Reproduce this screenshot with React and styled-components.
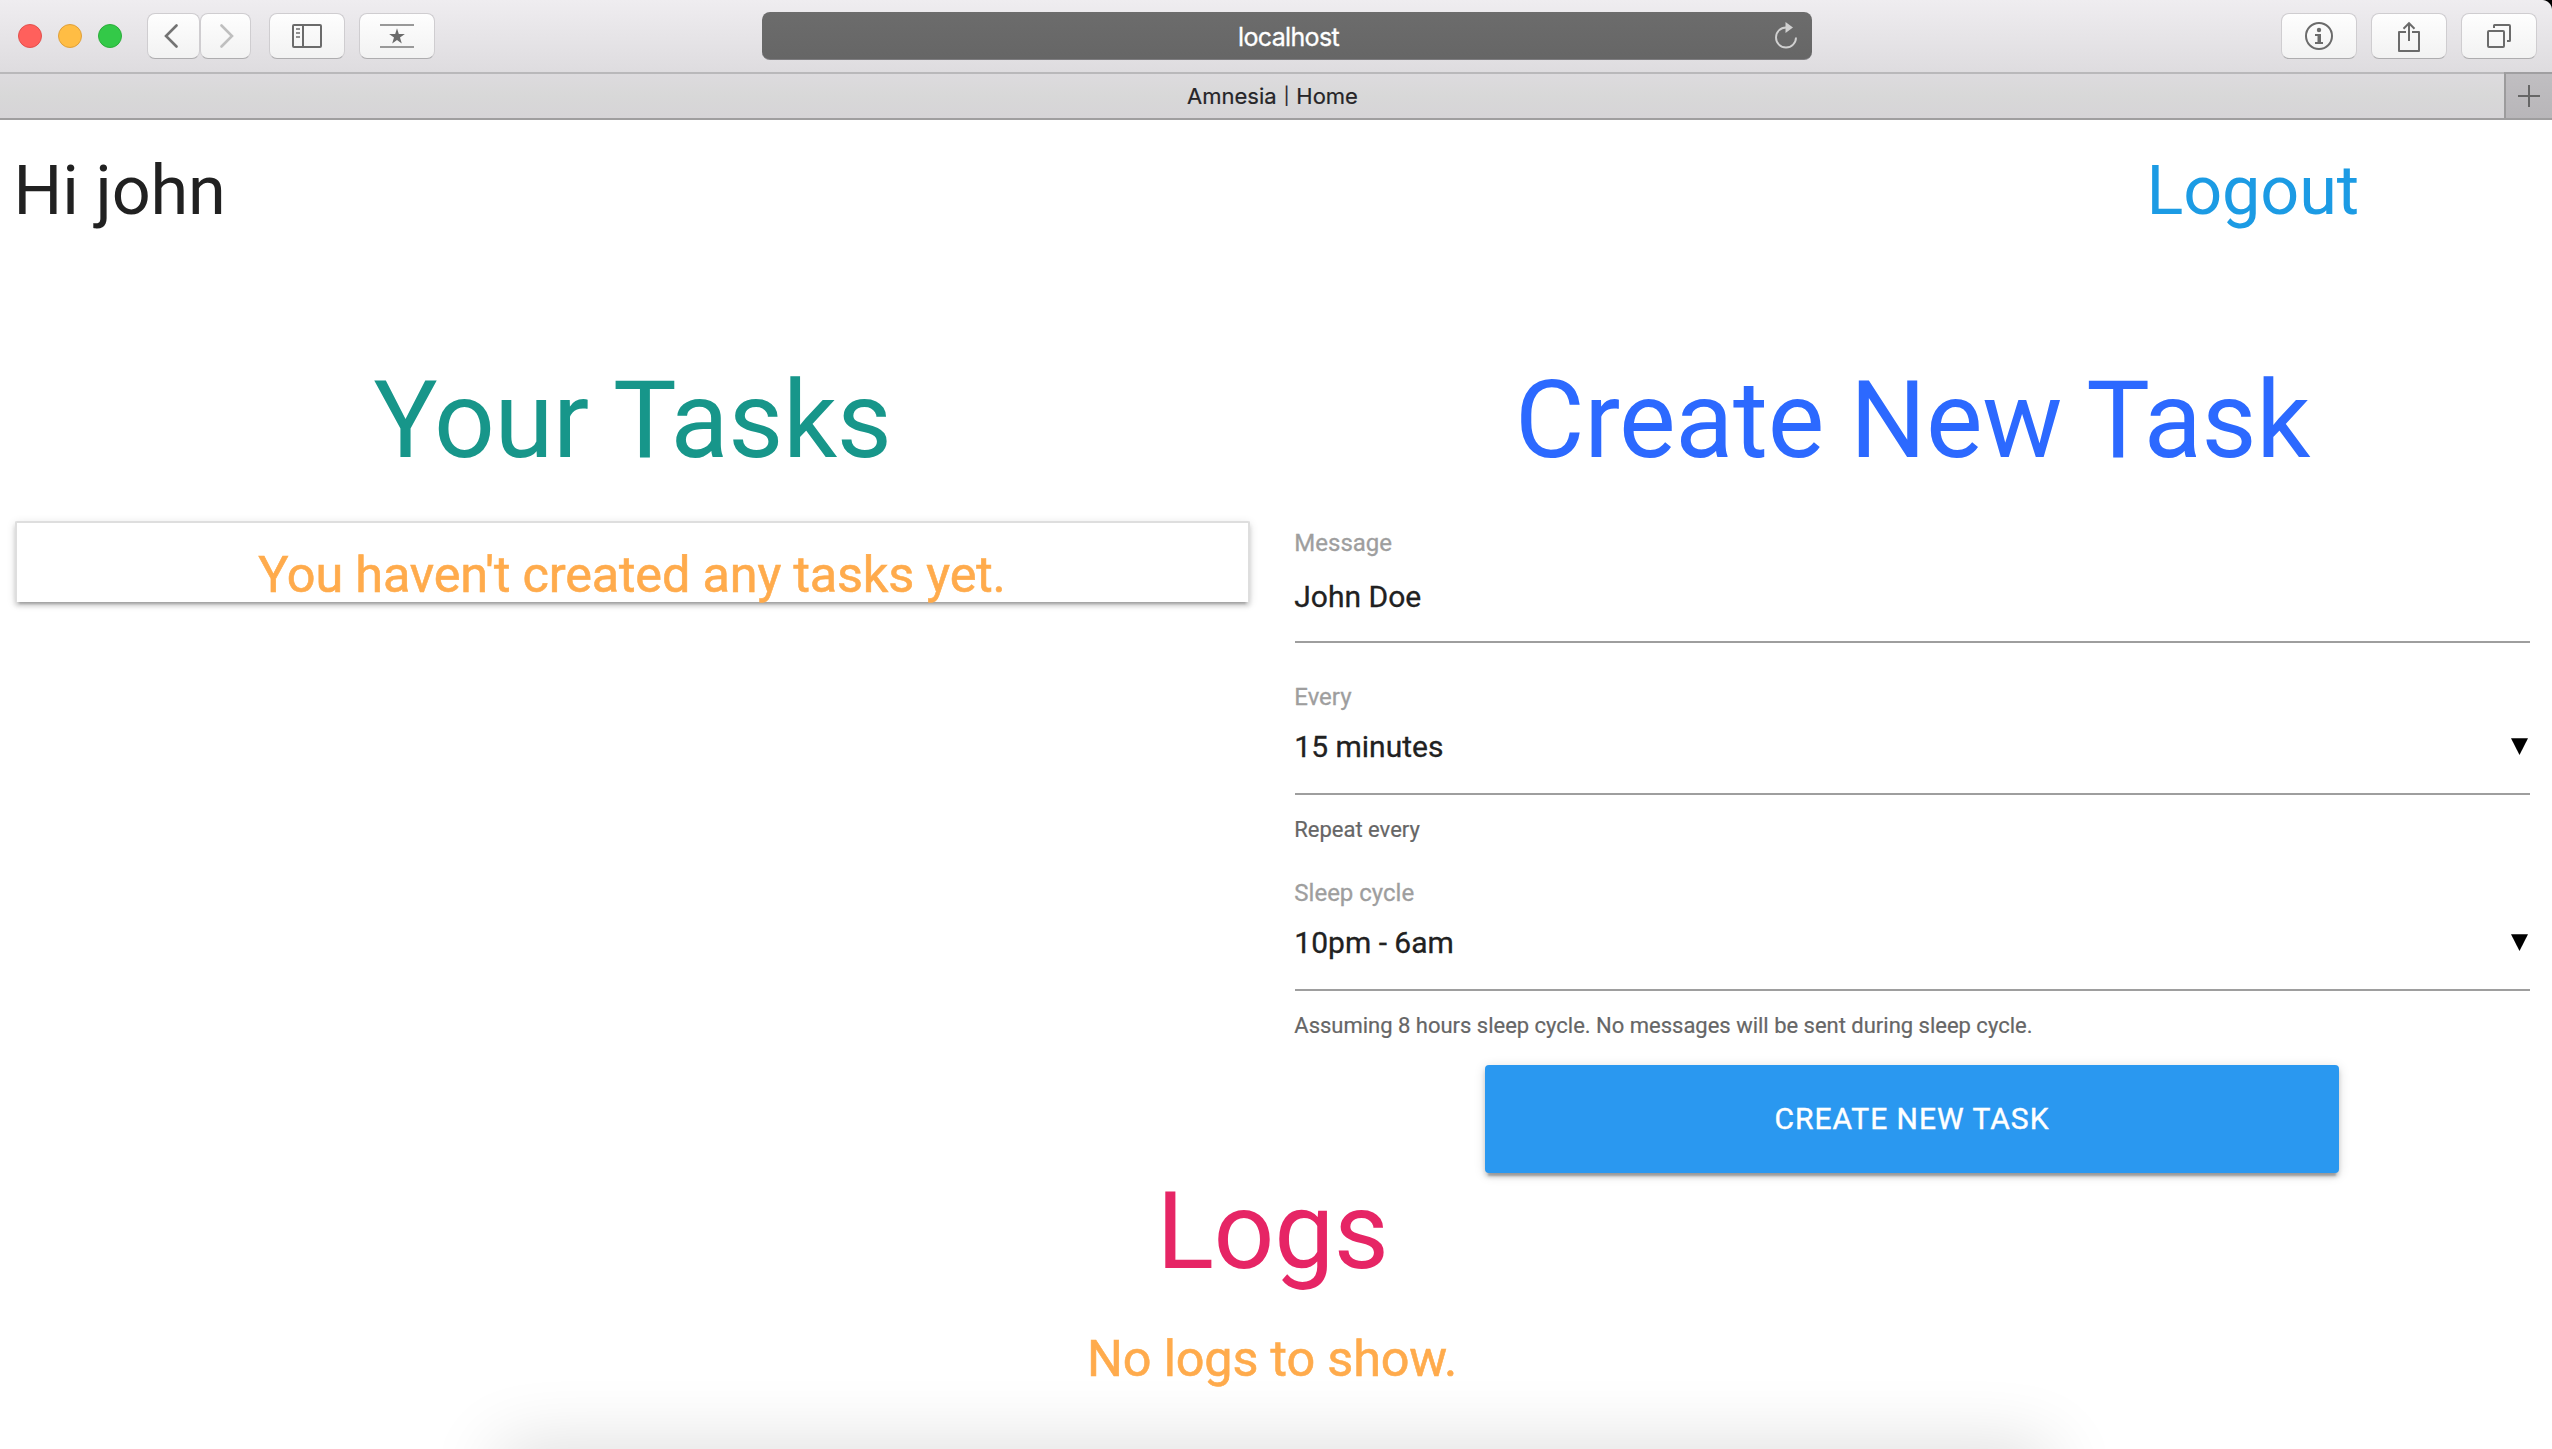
import React from "react";
import styled, { createGlobalStyle } from "styled-components";

const Global = createGlobalStyle`
  * { box-sizing: border-box; }
  html, body { margin: 0; padding: 0; background: #fff; overflow: hidden; }
  body { font-family: Roboto, "Liberation Sans", sans-serif; }
`;

const Window = styled.div`
  width: 2552px;
  height: 1449px;
  overflow: hidden;
  display: flex;
  flex-direction: column;
  background: #fff;
`;

const Toolbar = styled.header`
  flex: none;
  height: 74px;
  display: grid;
  grid-template-columns: 762px 1050px 1fr;
  align-items: start;
  padding-top: 12px;
  background: radial-gradient(circle at 0 10px, transparent 9.5px, #000 10.5px) right top / 10px 10px no-repeat,
    linear-gradient(#efedf0, #dedcdf 72px, #b9b8ba 72px);
`;

const Group = styled.div`
  display: flex;
  align-items: center;
  justify-content: ${(p) => (p.$end ? "flex-end" : "flex-start")};
  padding: ${(p) => (p.$end ? "1px 15px 0 0" : "1px 0 0 18px")};
  gap: ${(p) => (p.$end ? "14px" : "0")};
`;

const Light = styled.span`
  width: 24px;
  height: 24px;
  margin-right: 16px;
  border-radius: 50%;
  background: ${(p) => p.$fill};
  border: 1px solid ${(p) => p.$edge};
`;

const ToolButton = styled.button`
  display: grid;
  place-items: center;
  width: ${(p) => p.$w || 76}px;
  height: 46px;
  padding: 0 ${(p) => p.$pr || 0}px 0 ${(p) => p.$pl || 0}px;
  margin: 0 0 0 ${(p) => p.$ml || 0}px;
  border: 1px solid #cfcdd0;
  border-bottom-color: #aeadaf;
  border-radius: 8px;
  background: linear-gradient(#fefefe, #f2f2f2);
`;

const Address = styled.div`
  display: grid;
  grid-template-columns: 55px 1fr 52px;
  align-items: center;
  justify-items: center;
  height: 48px;
  border-radius: 8px;
  background: linear-gradient(#6c6c6c, #666);
  border-bottom: 1px solid #7e7d80;
  color: #fff;
  font: 25px/30px Inter, sans-serif;
  letter-spacing: -0.65px;
  -webkit-text-stroke: 0.3px #fff;
`;

const Host = styled.span`
  padding-top: 2px;
`;

const Tabs = styled.nav`
  flex: none;
  height: 46px;
  display: grid;
  grid-template-columns: 1fr 48px;
  border-bottom: 2px solid #9f9e9f;
`;

const Tab = styled.div`
  display: flex;
  align-items: center;
  justify-content: center;
  gap: 7px;
  padding-left: 41px;
  background: linear-gradient(#dddbde, #d8d8d8 50%, #d6d4d7);
  color: #262528;
  font: 22px Inter, sans-serif;
  -webkit-text-stroke: 0.2px #262528;
`;

const Pipe = styled.span`
  font-size: 17px;
  line-height: 22px;
`;

const AddTab = styled.div`
  display: grid;
  place-items: center;
  margin-top: -2px;
  border-left: 2px solid #9c9b9c;
  border-top: 2px solid #a09fa1;
  background: linear-gradient(#c0bec1, #b8b6b9);
`;

const Page = styled.main`
  flex: 1;
  position: relative;
  display: flex;
  flex-direction: column;
  padding: 0 22px 0 15px;
`;

const TopRow = styled.div`
  display: flex;
  justify-content: space-between;
  padding: 34px 171px 0 0;
  margin-left: -1.5px;
`;

const Greeting = styled.h4`
  margin: 0;
  font-size: 68.4px;
  line-height: 75px;
  font-weight: 400;
  color: ${(p) => p.$color};
  letter-spacing: -0.15px;
`;

const Columns = styled.div`
  display: grid;
  grid-template-columns: 1fr 1fr;
  column-gap: 45px;
  height: 944px;
  padding-top: 133px;
`;

const Column = styled.section`
  display: flex;
  flex-direction: column;
`;

const Title = styled.h2`
  margin: 0;
  height: 118px;
  line-height: 118px;
  font-size: 106.8px;
  font-weight: 400;
  text-align: center;
  white-space: nowrap;
  color: ${(p) => p.$color};
  letter-spacing: -0.35px;
`;

const Collection = styled.div`
  height: 81px;
  margin-top: 41px;
  padding-top: 23px;
  border: 2px solid #dedede;
  border-bottom: 0;
  border-radius: 2px;
  background: #fff;
  box-shadow: 0 4px 4px 0 rgba(0,0,0,.14), 0 6px 2px -4px rgba(0,0,0,.2), 0 2px 10px 0 rgba(0,0,0,.12);
`;

const Notice = styled.p`
  margin: 0 1px 0 0;
  text-align: center;
  font-size: 50.4px;
  line-height: 58px;
  letter-spacing: -0.17px;
  color: #ffab4c;
  -webkit-text-stroke: 0.6px #ffab4c;
`;

const Form = styled.form`
  display: flex;
  flex-direction: column;
  padding-top: 47px;
  text-indent: -0.7px;
`;

const Label = styled.label`
  height: 32px;
  margin-top: ${(p) => p.$mt || 0}px;
  line-height: 32px;
  font-size: 24px;
  color: #9e9e9e;
  -webkit-text-stroke: 0.3px #9e9e9e;
`;

const Value = styled.div`
  display: flex;
  justify-content: space-between;
  align-items: center;
  height: ${(p) => p.$h}px;
  padding: 0 2px ${(p) => p.$pb}px 0;
  border-bottom: 2px solid #9e9e9e;
  font-size: 30px;
  color: #212121;
  -webkit-text-stroke: 0.3px #212121;
`;

const Hint = styled.small`
  height: 30px;
  margin: 20px 0 ${(p) => p.$mb}px;
  line-height: 30px;
  font-size: 22px;
  letter-spacing: -0.01px;
  color: #666;
  -webkit-text-stroke: 0.2px #666;
`;

const Submit = styled.button`
  align-self: center;
  width: 854px;
  height: 108px;
  margin-right: 1px;
  padding: 0 0 2px;
  border: 0;
  border-radius: 4px;
  background: #2a98f0;
  color: #fff;
  font: 30px Roboto, sans-serif;
  letter-spacing: 1px;
  -webkit-text-stroke: 0.4px #fff;
  box-shadow: 0 4px 4px 0 rgba(0,0,0,.16), 0 6px 2px -3px rgba(0,0,0,.22), 0 2px 12px 0 rgba(0,0,0,.14);
`;

const Logs = styled.section`
  display: flex;
  flex-direction: column;
  gap: 39px;
`;

const BottomShade = styled.div`
  position: absolute;
  left: 500px;
  right: 504px;
  bottom: -60px;
  height: 60px;
  background: #bbb;
  box-shadow: 0 0 72px 0 rgba(0,0,0,.16);
`;

const Caret = () => (
  <svg width="17" height="17" viewBox="0 0 17 17"><path d="M0 .3H17L8.5 17Z" fill="#000" /></svg>
);

export default function App() {
  return (
    <Window>
      <Global />
      <Toolbar>
        <Group>
          <Light $fill="#ff605c" $edge="#e2504d" />
          <Light $fill="#ffbd44" $edge="#dfa03a" />
          <Light $fill="#33c948" $edge="#2bad3a" />
          <ToolButton $w={53} $ml={9} $pr={6}>
            <svg width="14" height="26" viewBox="0 0 14 26"><path d="M12.5 2.5L2 13 12.5 23.5" fill="none" stroke="#737373" strokeWidth="2.6" strokeLinecap="round" /></svg>
          </ToolButton>
          <ToolButton $w={51} $pl={3}>
            <svg width="14" height="26" viewBox="0 0 14 26"><path d="M1.5 2.5L12 13 1.5 23.5" fill="none" stroke="#bfbfbf" strokeWidth="2.6" strokeLinecap="round" /></svg>
          </ToolButton>
          <ToolButton $ml={18}>
            <svg width="30" height="24" viewBox="0 0 30 24" fill="none" stroke="#6b6b6b" strokeWidth="2">
              <rect x="1" y="1" width="28" height="22" rx="1" /><path d="M11 1V23" /><path d="M4 5H8M4 9H8M4 13H8" stroke="#909090" />
            </svg>
          </ToolButton>
          <ToolButton $ml={14}>
            <svg width="34" height="24" viewBox="0 0 34 24">
              <path d="M0 1H34M0 23H34" stroke="#999" strokeWidth="2" />
              <path d="M17 4.300l1.800 5.700h6.100l-4.900 3.600 1.800 5.900-4.800-3.500-4.800 3.500 1.800-5.900L9.100 10h6.100z" fill="#6b6b6b" />
            </svg>
          </ToolButton>
        </Group>
        <Address>
          <span />
          <Host>localhost</Host>
          <svg width="24" height="28" viewBox="0 0 24 28">
            <path d="M12 5.500A10 10 0 1 0 22 15.500" fill="none" stroke="#d0d0d0" strokeWidth="1.900" />
            <path d="M11.500 0L19 5.600 11.500 11Z" fill="#d0d0d0" />
          </svg>
        </Address>
        <Group $end>
          <ToolButton>
            <svg width="28" height="28" viewBox="0 0 28 28">
              <circle cx="14" cy="14" r="13" fill="none" stroke="#6b6b6b" strokeWidth="2" />
              <circle cx="14" cy="8" r="2.200" fill="#6b6b6b" />
              <path d="M10 12H16V20H18V22H10V20H12.500V14H10Z" fill="#6b6b6b" />
            </svg>
          </ToolButton>
          <ToolButton>
            <svg width="22" height="32" viewBox="0 0 22 32" fill="none" stroke="#6b6b6b" strokeWidth="2">
              <path d="M8 12H1V31H21V12H14" strokeLinejoin="round" /><path d="M11 21V3M5.500 8.700L11 3.200 16.500 8.700" />
            </svg>
          </ToolButton>
          <ToolButton>
            <svg width="24" height="24" viewBox="0 0 24 24" fill="none" stroke="#6b6b6b" strokeWidth="2">
              <rect x="1" y="7" width="16" height="16" rx="1" /><path d="M7 4V1.500Q7 1 7.500 1H22Q23 1 23 2V16.500Q23 17 22.500 17H20" />
            </svg>
          </ToolButton>
        </Group>
      </Toolbar>
      <Tabs>
        <Tab><span>Amnesia</span><Pipe>|</Pipe><span>Home</span></Tab>
        <AddTab><svg width="22" height="22" viewBox="0 0 22 22"><path d="M11 0V22M0 11H22" stroke="#666" strokeWidth="2" /></svg></AddTab>
      </Tabs>
      <Page>
        <TopRow>
          <Greeting $color="#212121">Hi john</Greeting>
          <Greeting $color="#1c9be4">Logout</Greeting>
        </TopRow>
        <Columns>
          <Column>
            <Title $color="#17968a">Your Tasks</Title>
            <Collection><Notice>You haven't created any tasks yet.</Notice></Collection>
          </Column>
          <Column>
            <Title $color="#2c69ff">Create New Task</Title>
            <Form>
              <Label>Message</Label>
              <Value $h={84} $pb={8}>John Doe</Value>
              <Label $mt={38}>Every</Label>
              <Value $h={82} $pb={14}>15 minutes<Caret /></Value>
              <Hint $mb={32}>Repeat every</Hint>
              <Label>Sleep cycle</Label>
              <Value $h={82} $pb={14}>10pm - 6am<Caret /></Value>
              <Hint $mb={24}>Assuming 8 hours sleep cycle. No messages will be sent during sleep cycle.</Hint>
              <Submit type="button">CREATE NEW TASK</Submit>
            </Form>
          </Column>
        </Columns>
        <Logs>
          <Title $color="#e62565">Logs</Title>
          <Notice>No logs to show.</Notice>
        </Logs>
        <BottomShade />
      </Page>
    </Window>
  );
}
